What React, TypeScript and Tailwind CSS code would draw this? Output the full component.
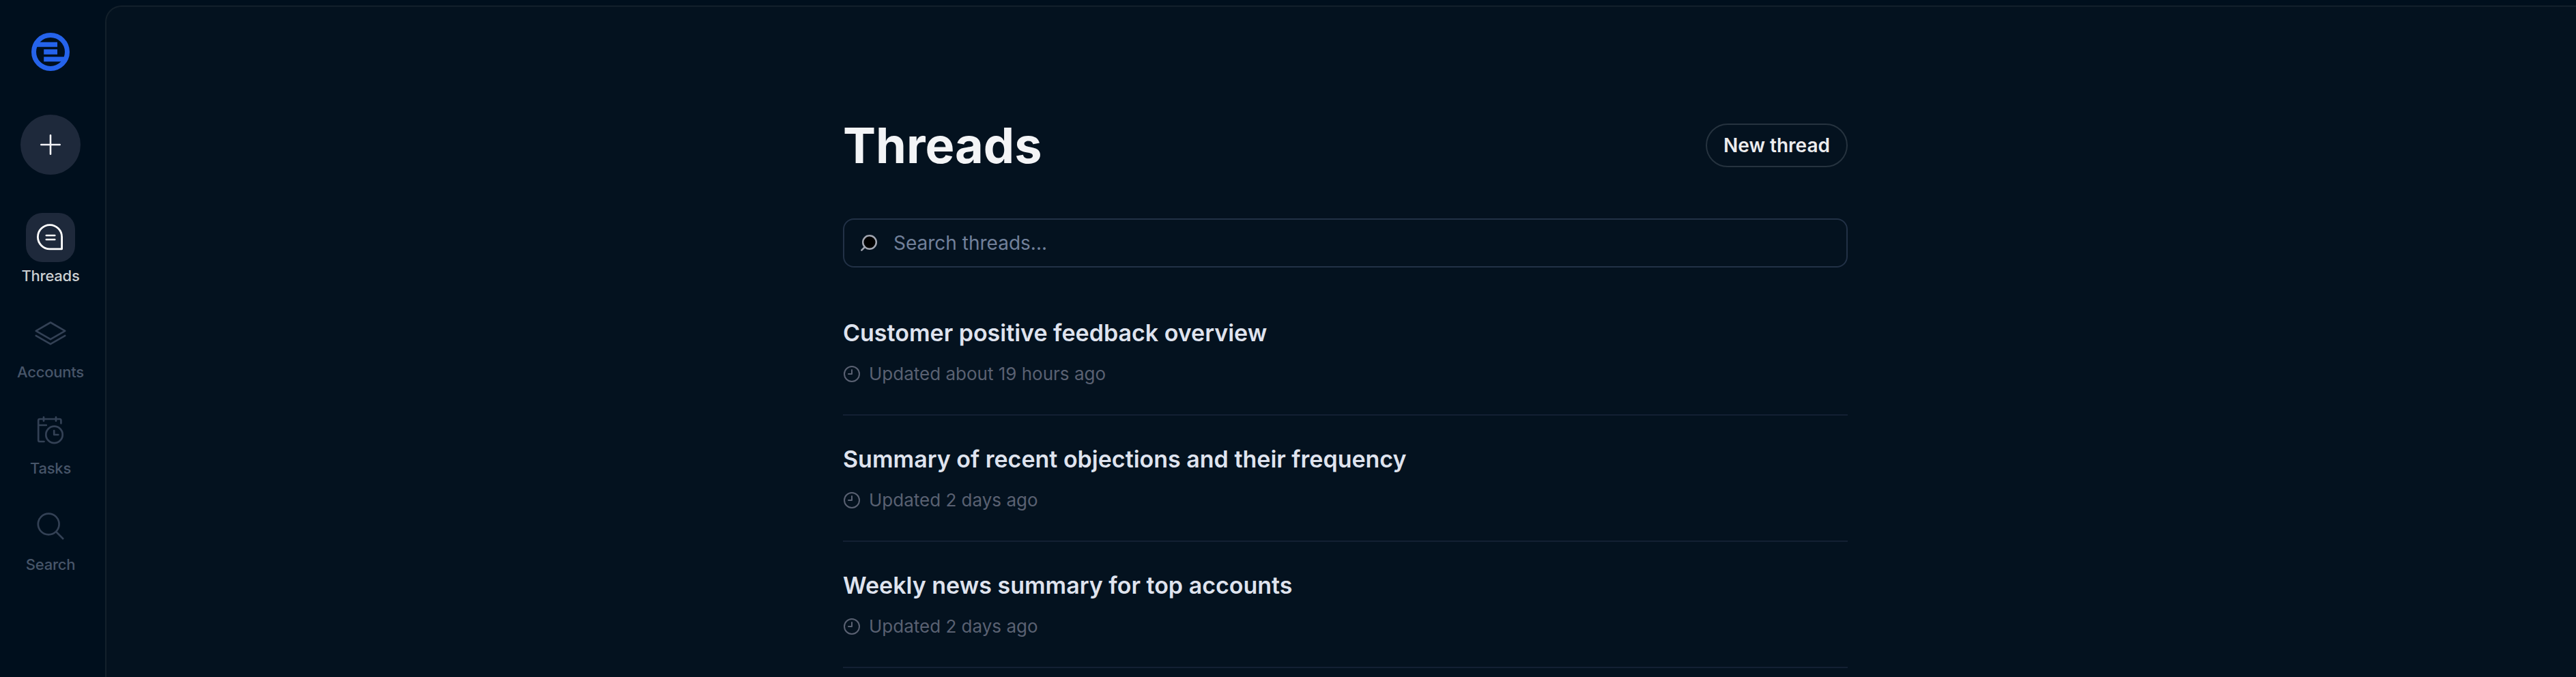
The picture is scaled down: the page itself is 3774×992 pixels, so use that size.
import React from "react";

const threads = [
  { title: "Customer positive feedback overview", meta: "Updated about 19 hours ago" },
  { title: "Summary of recent objections and their frequency", meta: "Updated 2 days ago" },
  { title: "Weekly news summary for top accounts", meta: "Updated 2 days ago" },
];

function Logo() {
  return (
    <svg className="size-14" viewBox="0 0 56 56" fill="none">
      <circle cx="28" cy="28" r="24.5" stroke="#2563eb" strokeWidth="7" />
      <path d="M8 13.8H38V20.8H5zM18.2 24.2H38V31.8H18.2zM18.2 35.2H51L47 42.2H18.2z" fill="#2563eb" />
    </svg>
  );
}

function ThreadsIcon() {
  return (
    <svg className="size-12" viewBox="0 0 48 48" fill="none" stroke="#fff" strokeWidth="2.8" strokeLinecap="round" strokeLinejoin="round">
      <path d="M23 5.6A17.6 17.6 0 0 0 23 40.8H40.6V23.2A17.6 17.6 0 0 0 23 5.6Z" />
      <path d="M17.8 21H30.3M17.8 27H30.3" strokeWidth="2.6" />
    </svg>
  );
}

function AccountsIcon() {
  return (
    <svg className="size-12" viewBox="0 0 48 48" fill="none" stroke="#334155" strokeWidth="2.6" strokeLinecap="round" strokeLinejoin="round">
      <path d="M24 7.5L45.3 19.8L24 32.2L2.7 19.8Z" />
      <path d="M2.7 26.8L24 39.2L45.3 26.8" />
    </svg>
  );
}

function TasksIcon() {
  return (
    <svg className="size-12" viewBox="0 0 48 48" fill="none" stroke="#334155" strokeWidth="2.7" strokeLinecap="round" strokeLinejoin="round">
      <path d="M14.5 41H8.2Q6.2 41 6.2 39V10Q6.2 8 8.2 8H37.4Q39.4 8 39.4 10V14.3" />
      <path d="M7 17H17.8M14 5.3V10.7M32 5.3V10.7" />
      <circle cx="29.5" cy="30.9" r="12.2" />
      <path d="M29.2 25V31H35.3" />
    </svg>
  );
}

function SearchIcon() {
  return (
    <svg className="size-12" viewBox="0 0 48 48" fill="none" stroke="#334155" strokeWidth="2.7">
      <circle cx="21.2" cy="21" r="15.4" />
      <path d="M32 32L43 43" />
    </svg>
  );
}

function NavItem({ icon, label, active }: { icon: React.ReactNode; label: string; active?: boolean }) {
  return (
    <a className="flex h-[141px] flex-col items-center">
      <span className={active ? "flex size-[72px] items-center justify-center rounded-[24px] bg-[#1e293b]" : "flex size-[72px] items-center justify-center"}>
        {icon}
      </span>
      <span className={active ? "mt-1 text-[22px] leading-8 font-medium tracking-[-0.01em] text-[#cbd0d2]" : "mt-1 text-[22px] leading-8 font-medium tracking-[-0.01em] text-[#475569]"}>
        {label}
      </span>
    </a>
  );
}

function ThreadRow({ title, meta }: { title: string; meta: string }) {
  return (
    <li className="h-[185px] border-b-2 border-[#132033] pt-[40px]">
      <h2 className="text-[34px] leading-[48px] font-semibold text-[#dfe3ee]">{title}</h2>
      <p className="mt-[18px] flex items-center gap-3 text-[26px] leading-9 text-[#5a6172]">
        <svg className="size-[26px]" viewBox="0 0 26 26" fill="none" stroke="currentColor" strokeWidth="2" strokeLinecap="round" strokeLinejoin="round">
          <circle cx="13" cy="13" r="11" />
          <path d="M13 7V13H8" />
        </svg>
        {meta}
      </p>
    </li>
  );
}

export default function App() {
  return (
    <div className="flex h-[992px] w-full overflow-hidden bg-[#000f1d] font-['Inter',sans-serif]">
      <aside className="flex w-[154px] shrink-0 flex-col items-center pt-12 pr-[6px]">
        <Logo />
        <button className="mt-16 flex size-[88px] shrink-0 items-center justify-center rounded-full bg-[#1e293b]">
          <svg className="size-8" viewBox="0 0 32 32" stroke="#f4f4f8" strokeWidth="2.6" strokeLinecap="round">
            <path d="M16 2.3V29.7M2.3 16H29.7" />
          </svg>
        </button>
        <nav className="mt-14 flex flex-col items-center">
          <NavItem icon={<ThreadsIcon />} label="Threads" active />
          <NavItem icon={<AccountsIcon />} label="Accounts" />
          <NavItem icon={<TasksIcon />} label="Tasks" />
          <NavItem icon={<SearchIcon />} label="Search" />
        </nav>
      </aside>
      <main className="mt-2 h-[1100px] flex-1 rounded-tl-[24px] border-t-2 border-l-2 border-[#13202b] bg-[#04121f] pl-[1079px]">
        <div className="w-[1472px] pt-[158px]">
          <header className="flex h-[90px] items-center justify-between">
            <h1 className="text-[72px] leading-[90px] font-bold text-[#f3f4f6]">Threads</h1>
            <button className="flex h-16 w-[208px] items-center justify-center rounded-full border-2 border-[#26333f] text-[28px] font-semibold text-[#ececee]">
              New thread
            </button>
          </header>
          <div className="mt-[62px] flex h-[72px] items-center gap-[23px] rounded-[16px] border-2 border-[#223146] pl-[23px]">
            <svg className="size-[26px]" viewBox="0 0 26 26" fill="#000" stroke="#a1a5b0" strokeWidth="2.5" strokeLinecap="round">
              <circle cx="14" cy="12" r="9.8" />
              <path d="M7 19L2.3 23.7" />
            </svg>
            <span className="text-[28px] leading-10 text-[#71809a]">Search threads...</span>
          </div>
          <ul className="mt-8">
            {threads.map((t) => (
              <ThreadRow key={t.title} title={t.title} meta={t.meta} />
            ))}
          </ul>
        </div>
      </main>
    </div>
  );
}
